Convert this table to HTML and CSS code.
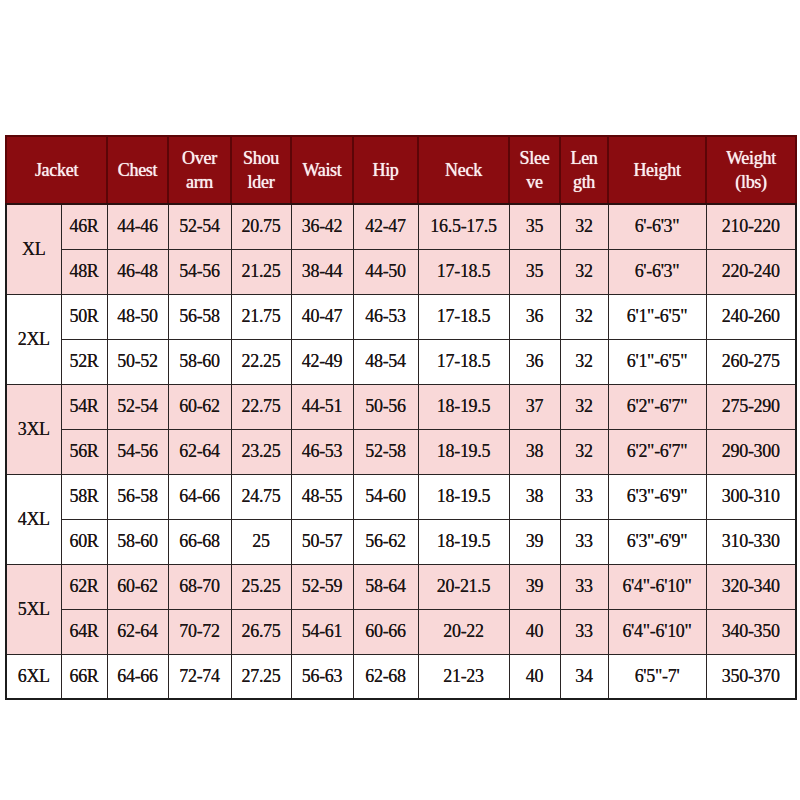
FILE: index.html
```html
<!DOCTYPE html>
<html>
<head>
<meta charset="utf-8">
<link rel="stylesheet" href="styles.css">
</head>
<body>
<div class="page">
<table class="chart">
<colgroup>
<col class="c-size"><col class="c-code"><col class="c-chest"><col class="c-over"><col class="c-shoulder"><col class="c-waist"><col class="c-hip"><col class="c-neck"><col class="c-sleeve"><col class="c-length"><col class="c-height"><col class="c-weight">
</colgroup>
<thead>
<tr class="head">
<th colspan="2">Jacket</th>
<th>Chest</th>
<th>Over<br>arm</th>
<th>Shou<br>lder</th>
<th>Waist</th>
<th>Hip</th>
<th>Neck</th>
<th>Slee<br>ve</th>
<th>Len<br>gth</th>
<th>Height</th>
<th>Weight<br>(lbs)</th>
</tr>
</thead>
<tbody>
<tr class="pink"><td rowspan="2" class="size">XL</td><td>46R</td><td>44-46</td><td>52-54</td><td>20.75</td><td>36-42</td><td>42-47</td><td>16.5-17.5</td><td>35</td><td>32</td><td>6'-6'3"</td><td>210-220</td></tr>
<tr class="pink"><td>48R</td><td>46-48</td><td>54-56</td><td>21.25</td><td>38-44</td><td>44-50</td><td>17-18.5</td><td>35</td><td>32</td><td>6'-6'3"</td><td>220-240</td></tr>
<tr class="white"><td rowspan="2" class="size">2XL</td><td>50R</td><td>48-50</td><td>56-58</td><td>21.75</td><td>40-47</td><td>46-53</td><td>17-18.5</td><td>36</td><td>32</td><td>6'1"-6'5"</td><td>240-260</td></tr>
<tr class="white"><td>52R</td><td>50-52</td><td>58-60</td><td>22.25</td><td>42-49</td><td>48-54</td><td>17-18.5</td><td>36</td><td>32</td><td>6'1"-6'5"</td><td>260-275</td></tr>
<tr class="pink"><td rowspan="2" class="size">3XL</td><td>54R</td><td>52-54</td><td>60-62</td><td>22.75</td><td>44-51</td><td>50-56</td><td>18-19.5</td><td>37</td><td>32</td><td>6'2"-6'7"</td><td>275-290</td></tr>
<tr class="pink"><td>56R</td><td>54-56</td><td>62-64</td><td>23.25</td><td>46-53</td><td>52-58</td><td>18-19.5</td><td>38</td><td>32</td><td>6'2"-6'7"</td><td>290-300</td></tr>
<tr class="white"><td rowspan="2" class="size">4XL</td><td>58R</td><td>56-58</td><td>64-66</td><td>24.75</td><td>48-55</td><td>54-60</td><td>18-19.5</td><td>38</td><td>33</td><td>6'3"-6'9"</td><td>300-310</td></tr>
<tr class="white"><td>60R</td><td>58-60</td><td>66-68</td><td>25</td><td>50-57</td><td>56-62</td><td>18-19.5</td><td>39</td><td>33</td><td>6'3"-6'9"</td><td>310-330</td></tr>
<tr class="pink"><td rowspan="2" class="size">5XL</td><td>62R</td><td>60-62</td><td>68-70</td><td>25.25</td><td>52-59</td><td>58-64</td><td>20-21.5</td><td>39</td><td>33</td><td>6'4"-6'10"</td><td>320-340</td></tr>
<tr class="pink"><td>64R</td><td>62-64</td><td>70-72</td><td>26.75</td><td>54-61</td><td>60-66</td><td>20-22</td><td>40</td><td>33</td><td>6'4"-6'10"</td><td>340-350</td></tr>
<tr class="white"><td class="size">6XL</td><td>66R</td><td>64-66</td><td>72-74</td><td>27.25</td><td>56-63</td><td>62-68</td><td>21-23</td><td>40</td><td>34</td><td>6'5"-7'</td><td>350-370</td></tr>
</tbody>
</table>
</div>
</body>
</html>
```

FILE: styles.css
```css
html, body {
  margin: 0;
  padding: 0;
  background: #ffffff;
}
.page {
  padding: 135px 5px 0 5px;
}
.chart {
  width: 790px;
  table-layout: fixed;
  border-collapse: collapse;
  font-family: "Liberation Serif", "Times New Roman", serif;
  font-size: 18px;
  color: #1a1414;
  border: 2px solid #1c1c1c;
}
.c-size { width: 55px; }
.c-code { width: 46px; }
.c-chest { width: 61px; }
.c-over { width: 63px; }
.c-shoulder { width: 60px; }
.c-waist { width: 62px; }
.c-hip { width: 65px; }
.c-neck { width: 91px; }
.c-sleeve { width: 51px; }
.c-length { width: 48px; }
.c-height { width: 98px; }
.c-weight { width: 90px; }

.head {
  height: 68px;
  background: #8a0c10;
}
.head th {
  color: #fbeeee;
  font-weight: normal;
  font-size: 18px;
  line-height: 24px;
  padding: 0;
  text-align: center;
  vertical-align: middle;
  border: 2px solid #5c0507;
  border-bottom-color: #2a1010;
  text-shadow: 0 0 0.8px #ffffff;
  letter-spacing: -0.3px;
}
tbody tr {
  height: 45px;
}
tbody td {
  padding: 0;
  text-align: center;
  vertical-align: middle;
  border: 1.5px solid #2a2424;
  white-space: nowrap;
  text-shadow: 0 0 0.6px #3a3030;
  letter-spacing: -0.3px;
}
.pink td {
  background: #f9d8d8;
}
.white td {
  background: #ffffff;
}
```
